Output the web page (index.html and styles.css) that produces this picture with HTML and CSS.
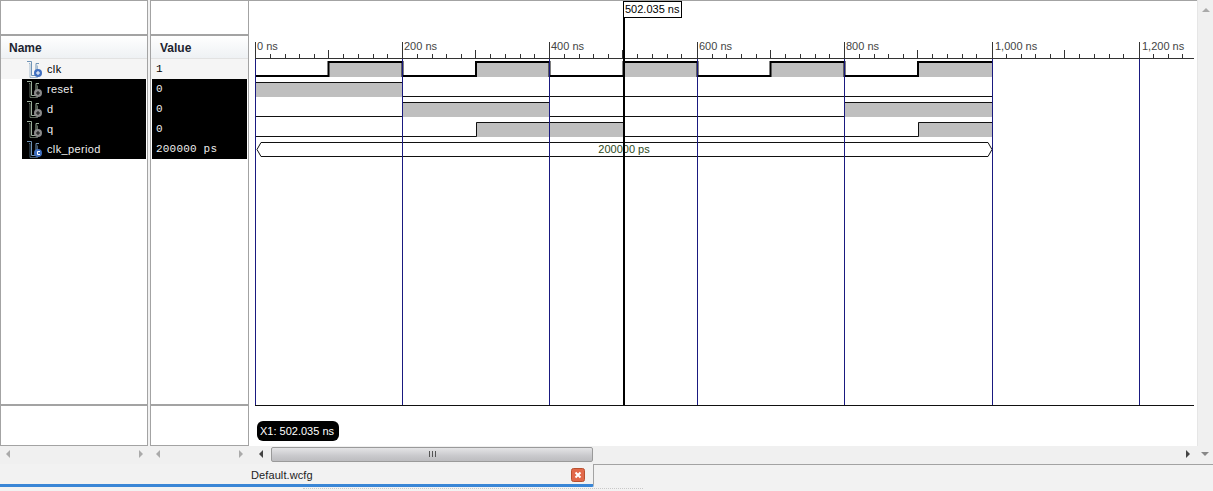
FILE: index.html
```html
<!DOCTYPE html>
<html>
<head>
    <title>Default.wcfg</title>
    <link rel="stylesheet" href="styles.css">
</head>
<body>
    <svg class="defs">
        <symbol id="pulse" viewBox="0 0 16 18">
            <path d="M0 1.5h4.5v14h4.5v-12h3" fill="none" stroke-width="1"/>
            <path d="M2 3.5h1v14h7.5v-12" fill="none" stroke-width="1" opacity="0.6"/>
        </symbol>
    </svg>

    <div class="panes">
        <div class="pane names">
            <div class="pane-top"></div>
            <div class="pane-head">Name</div>
            <div class="pane-list">
                <div class="row">
                    <svg class="icon blue" width="18" height="18"><use href="#pulse"/><circle class="badge" cx="12" cy="13" r="4"/><path class="mark" d="M10 13h4M12 11v4"/></svg>
                    clk
                </div>
                <div class="row sel">
                    <svg class="icon grey" width="18" height="18"><use href="#pulse"/><circle class="badge" cx="12" cy="13" r="4"/><path class="mark" d="M10 13h4M12 11v4"/></svg>
                    reset
                </div>
                <div class="row sel">
                    <svg class="icon grey" width="18" height="18"><use href="#pulse"/><circle class="badge" cx="12" cy="13" r="4"/><path class="mark" d="M10 13h4M12 11v4"/></svg>
                    d
                </div>
                <div class="row sel">
                    <svg class="icon grey" width="18" height="18"><use href="#pulse"/><circle class="badge" cx="12" cy="13" r="4"/><path class="mark" d="M10 13h4M12 11v4"/></svg>
                    q
                </div>
                <div class="row sel">
                    <svg class="icon blue" width="18" height="18"><use href="#pulse"/><circle class="badge" cx="12" cy="13" r="4"/><path class="mark" d="M14 11.5h-2.5v3h2.5"/></svg>
                    clk_period
                </div>
            </div>
            <div class="pane-foot"></div>
        </div>

        <div class="pane values">
            <div class="pane-top"></div>
            <div class="pane-head">Value</div>
            <div class="pane-list">
                <div class="row">1</div>
                <div class="row sel">0</div>
                <div class="row sel">0</div>
                <div class="row sel">0</div>
                <div class="row sel">200000 ps</div>
            </div>
            <div class="pane-foot"></div>
        </div>

        <svg class="wave" viewBox="249 0 948 446" width="948" height="446">
            <path class="frame" d="M249 0.5H1197"/>
            <!-- ruler -->
            <path class="ruler" d="M255 58.5H1194"/>
            <path class="ruler" d="M255.5 42V58M402.5 42V58M549.5 42V58M697.5 42V58M844.5 42V58M992.5 42V58M1139.5 42V58"/>
            <path class="ruler" d="M328.5 50V58M475.5 50V58M622.5 50V58M770.5 50V58M917.5 50V58M1064.5 50V58"/>
            <path class="ruler" d="M270.5 54V58M285.5 54V58M299.5 54V58M314.5 54V58M343.5 54V58M358.5 54V58M373.5 54V58M387.5 54V58
                M417.5 54V58M432.5 54V58M446.5 54V58M461.5 54V58M490.5 54V58M505.5 54V58M520.5 54V58M534.5 54V58
                M564.5 54V58M579.5 54V58M593.5 54V58M608.5 54V58M637.5 54V58M652.5 54V58M667.5 54V58M681.5 54V58
                M712.5 54V58M726.5 54V58M741.5 54V58M756.5 54V58M785.5 54V58M800.5 54V58M815.5 54V58M829.5 54V58
                M859.5 54V58M874.5 54V58M888.5 54V58M903.5 54V58M932.5 54V58M947.5 54V58M962.5 54V58M976.5 54V58
                M1006.5 54V58M1021.5 54V58M1035.5 54V58M1050.5 54V58M1079.5 54V58M1094.5 54V58M1109.5 54V58M1123.5 54V58
                M1153.5 54V58M1168.5 54V58M1182.5 54V58"/>
            <text class="tick" x="257" y="50">0 ns</text>
            <text class="tick" x="404" y="50">200 ns</text>
            <text class="tick" x="551" y="50">400 ns</text>
            <text class="tick" x="699" y="50">600 ns</text>
            <text class="tick" x="846" y="50">800 ns</text>
            <text class="tick" x="995" y="50">1,000 ns</text>
            <text class="tick" x="1142" y="50">1,200 ns</text>

            <!-- high parts of the signals -->
            <path class="high" d="M328 62h74v15h-74zM476 62h73v15h-73zM623 62h74v15h-74zM770 62h74v15h-74zM918 62h74v15h-74z"/>
            <path class="high" d="M256 82h146v15h-146z"/>
            <path class="high" d="M402 102h147v15h-147zM844 102h148v15h-148z"/>
            <path class="high" d="M476 122h148v15h-148zM918 122h74v15h-74z"/>

            <!-- signal lines -->
            <path class="clock" d="M256 76H328.5V62H402.5V76H476V62H549.5V76H623.5V62H697.5V76H770.5V62H844.5V76H918V62H992.5"/>
            <path class="line" d="M256 82.5H402.5M402.5 96.5H992.5"/>
            <path class="line" d="M256 116.5H402.5V102.5H549.5V116.5H844.5V102.5H992.5"/>
            <path class="line" d="M256 136.5H476.5V122.5H624M624 136.5H918.5V122.5H992.5"/>
            <path class="line" d="M261 142.5H988L992 149.5L988 156.5H261L257 149.5Z"/>

            <!-- grid and cursor -->
            <path class="grid" d="M255.5 59V405M402.5 59V405M549.5 59V405M697.5 59V405M844.5 59V405M992.5 59V405M1139.5 59V405"/>
            <path class="line" d="M255 405.5H1194"/>
            <text class="bus" x="624" y="153">200000 ps</text>
            <path class="cursor" d="M624 17V405"/>
            <rect class="cursor-box" x="623.5" y="1.5" width="58" height="16"/>
            <text class="cursor-text" x="625" y="13">502.035 ns</text>
            <rect class="pill" x="257" y="421" width="82" height="20" rx="6"/>
            <text class="pill-text" x="260" y="435">X1: 502.035 ns</text>
        </svg>

        <div class="vscroll"><span class="arrow up"></span></div>
    </div>

    <div class="scrolls">
        <div class="bar bar-names"><span class="arrow left"></span><span class="arrow right"></span></div>
        <div class="bar bar-values"><span class="arrow left"></span><span class="arrow right"></span></div>
        <div class="bar bar-wave">
            <span class="arrow left dark"></span>
            <div class="thumb"><span class="grip"></span></div>
            <span class="arrow right dark push"></span>
        </div>
        <div class="bar bar-corner"><span class="arrow down"></span></div>
    </div>

    <div class="tabbar">
        <div class="tab">
            <span class="tab-name">Default.wcfg</span>
            <svg class="tab-close" width="14" height="14" viewBox="0 0 14 14">
                <rect x="0.5" y="0.5" width="13" height="13" rx="2" fill="#e2694a" stroke="#b8502f"/>
                <path d="M4.5 4.5l5 5M9.5 4.5l-5 5" stroke="#fff" stroke-width="2" fill="none"/>
            </svg>
        </div>
        <div class="tab-rest"></div>
    </div>
    <div class="sash"></div>
</body>
</html>
```

FILE: styles.css
```css
html, body {
    margin: 0;
    padding: 0;
    height: 100%;
    overflow: hidden;
}

body {
    width: 1213px;
    height: 491px;
    background-color: #f2f2f2;
    font-family: "Liberation Sans", Arial, sans-serif;
    font-size: 11px;
    color: #000;
}

.defs {
    display: none;
}

.panes {
    display: flex;
    height: 446px;
}

.pane {
    display: flex;
    flex-direction: column;
    box-sizing: border-box;
    height: 446px;
    background-color: #fff;
    border: 1px solid #a3a3a3;
}

.names {
    width: 148px;
    margin-right: 2px;
}

.values {
    width: 99px;
}

.pane-top {
    height: 33px;
    border-bottom: 2px solid #a3a3a3;
}

.pane-head {
    box-sizing: border-box;
    height: 23px;
    padding-top: 5px;
    background: linear-gradient(#fff, #eef1f4);
    border-bottom: 1px solid #e2e2e2;
    font-size: 12px;
    font-weight: bold;
    color: #1c2430;
}

.names .pane-head {
    padding-left: 8px;
}

.values .pane-head {
    padding-left: 9px;
}

.pane-list {
    flex: 1;
}

.pane-foot {
    height: 39px;
    border-top: 2px solid #a3a3a3;
}

.row {
    display: flex;
    align-items: center;
    height: 20px;
    background-color: #f5f5f5;
}

.names .row {
    padding-left: 25px;
    letter-spacing: 0.35px;
}

.names .row.sel {
    margin-left: 21px;
    margin-right: 1px;
    padding-left: 4px;
}

.values .row {
    padding-left: 5px;
    font-family: "Liberation Mono", "Courier New", monospace;
    letter-spacing: 0.2px;
}

.values .row.sel {
    margin-left: 1px;
    margin-right: 1px;
    padding-left: 4px;
}

.row.sel {
    background-color: #000;
    color: #eee;
}

.icon {
    flex: none;
    margin-right: 3px;
    stroke: #6f93b5;
}

.icon.grey {
    stroke: #9db09d;
}

.icon .badge {
    stroke: none;
    fill: #3f6fc0;
}

.icon.grey .badge {
    fill: #8a8a8a;
}

.icon .mark {
    fill: none;
    stroke: #fff;
    stroke-width: 1;
}

.icon.grey .mark {
    stroke: #111;
}

.wave {
    display: block;
    flex: none;
    background-color: #fff;
}

.wave text {
    font-family: "Liberation Sans", Arial, sans-serif;
    font-size: 11px;
}

.frame {
    fill: none;
    stroke: #a3a3a3;
    stroke-width: 1;
}

.ruler {
    fill: none;
    stroke: #333;
    stroke-width: 1;
}

.tick {
    fill: #444;
}

.high {
    fill: #bfbfbf;
}

.clock {
    fill: none;
    stroke: #000;
    stroke-width: 2;
}

.line {
    fill: none;
    stroke: #111;
    stroke-width: 1;
}

.grid {
    fill: none;
    stroke: #1a1a80;
    stroke-width: 1;
}

.bus {
    fill: #2c4a20;
    text-anchor: middle;
}

.cursor {
    fill: none;
    stroke: #000;
    stroke-width: 2;
}

.cursor-box {
    fill: #fff;
    stroke: #000;
    stroke-width: 1;
}

.pill {
    fill: #000;
}

.wave .pill-text {
    fill: #fff;
}

.vscroll {
    display: flex;
    justify-content: center;
    box-sizing: border-box;
    width: 16px;
    padding-top: 8px;
    background-color: #f0f0f0;
    border-left: 1px solid #e6e6e6;
}

.scrolls {
    display: flex;
    height: 18px;
    background-color: #f0f0f0;
}

.bar {
    display: flex;
    align-items: center;
    justify-content: space-between;
    box-sizing: border-box;
    height: 16px;
}

.bar-names {
    width: 150px;
    padding: 0 7px 0 6px;
}

.bar-values {
    width: 99px;
    padding: 0 6px;
}

.bar-wave {
    width: 948px;
    padding: 0 7px 0 10px;
    justify-content: flex-start;
}

.bar-corner {
    width: 16px;
    justify-content: center;
}

.thumb {
    display: flex;
    align-items: center;
    justify-content: center;
    box-sizing: border-box;
    width: 322px;
    height: 15px;
    margin-left: 8px;
    background: linear-gradient(#e4e4e6, #c9c9cc 60%, #bdbdc0);
    border: 1px solid #9a9a9a;
    border-radius: 2px;
}

.grip {
    width: 7px;
    height: 6px;
    background: repeating-linear-gradient(90deg, #555 0, #555 1px, transparent 1px, transparent 3px);
}

.arrow {
    display: block;
    width: 0;
    height: 0;
    border: 4px solid transparent;
}

.arrow.left {
    border-left-width: 0;
    border-right-color: #aaa;
}

.arrow.right {
    border-right-width: 0;
    border-left-color: #aaa;
}

.arrow.up {
    border-top-width: 0;
    border-bottom-color: #aaa;
}

.arrow.down {
    border-bottom-width: 0;
    border-top-color: #888;
}

.arrow.left.dark {
    border-right-color: #444;
}

.arrow.right.dark {
    border-left-color: #444;
}

.push {
    margin-left: auto;
}

.tabbar {
    display: flex;
    height: 23px;
}

.tab {
    display: flex;
    align-items: center;
    box-sizing: border-box;
    width: 594px;
    padding: 2px 8px 0 251px;
    border-right: 1px solid #a3a3a3;
    border-bottom: 3px solid #3a86d6;
    border-bottom-right-radius: 2px;
    color: #222;
    letter-spacing: 0.1px;
}

.tab-close {
    margin-left: auto;
}

.tab-rest {
    flex: 1;
    border-top: 1px solid #a3a3a3;
}

.sash {
    width: 340px;
    margin: 1px 0 0 303px;
    border-top: 1px dotted #c8c8c8;
}
```
